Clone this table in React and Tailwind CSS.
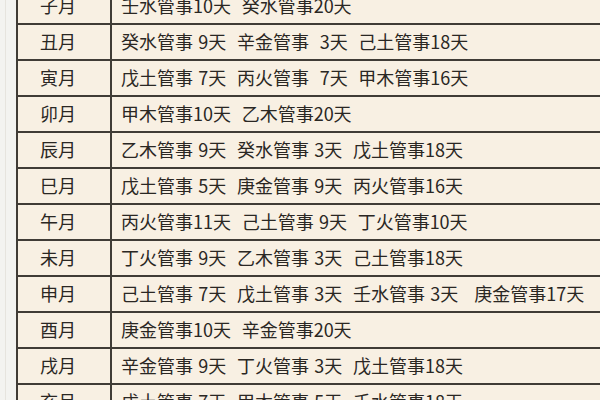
const rows = [
  ["子月", "壬水管事10天  癸水管事20天"],
  ["丑月", "癸水管事 9天  辛金管事  3天  己土管事18天"],
  ["寅月", "戊土管事 7天  丙火管事  7天  甲木管事16天"],
  ["卯月", "甲木管事10天  乙木管事20天"],
  ["辰月", "乙木管事 9天  癸水管事 3天  戊土管事18天"],
  ["巳月", "戊土管事 5天  庚金管事 9天  丙火管事16天"],
  ["午月", "丙火管事11天  己土管事 9天  丁火管事10天"],
  ["未月", "丁火管事 9天  乙木管事 3天  己土管事18天"],
  ["申月", "己土管事 7天  戊土管事 3天  壬水管事 3天   庚金管事17天"],
  ["酉月", "庚金管事10天  辛金管事20天"],
  ["戌月", "辛金管事 9天  丁火管事 3天  戊土管事18天"],
  ["亥月", "戊土管事 7天  甲木管事 5天  壬水管事18天"],
];

export default function App() {
  return (
    <div
      className="flex h-[400px] w-[600px] overflow-hidden bg-[#f3f3f0]"
      style={{ fontFamily: '"Noto Sans CJK SC", "Noto Sans", sans-serif' }}
    >
      <div className="w-4 shrink-0 pl-[5px]">
        <div className="h-full w-px bg-[#e6e4de]"></div>
      </div>
      <div className="-mt-[13px] w-[640px] shrink-0">
        <table className="w-full border-collapse bg-[#f8f0e3] text-[18px] text-[#2a2723]">
          <tbody>
            {rows.map(([month, text]) => (
              <tr key={month} className="h-[36px]">
                <td className="w-[94px] border-2 border-[#403c36] pb-[2px] pl-[22px] leading-none">
                  {month}
                </td>
                <td className="whitespace-pre border-2 border-[#403c36] pb-[2px] pl-[9px] leading-none [word-spacing:1.3px]">
                  {text}
                </td>
              </tr>
            ))}
          </tbody>
        </table>
      </div>
    </div>
  );
}
